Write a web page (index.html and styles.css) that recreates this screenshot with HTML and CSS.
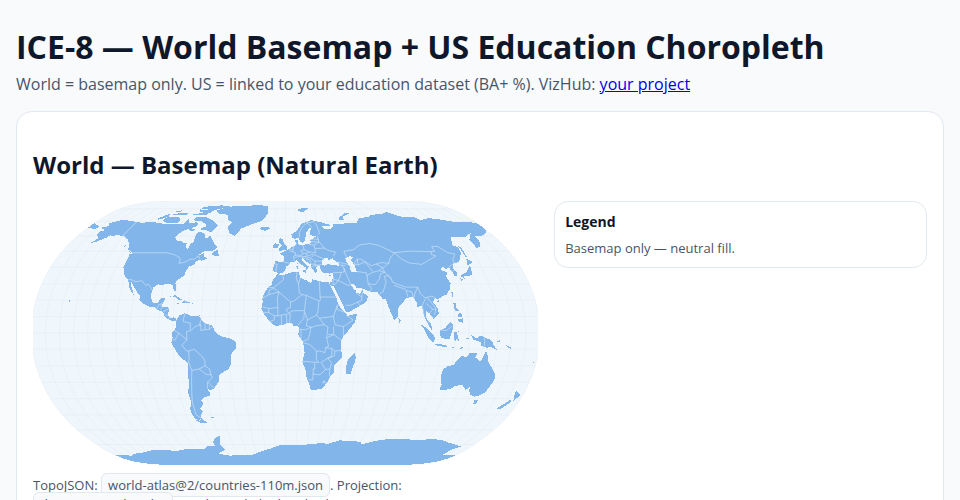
FILE: index.html
```html
<!DOCTYPE html>
<html lang="en">
<head>
<meta charset="utf-8">
<title>ICE-8 — World Basemap + US Education Choropleth</title>
<link rel="stylesheet" href="styles.css">
</head>
<body>
<header class="page-head">
  <h1 class="title">ICE-8 — World Basemap + US Education Choropleth</h1>
  <p class="subtitle">World = basemap only. US = linked to your education dataset (BA+ %). VizHub: <a href="#">your project</a></p>
</header>
<section class="card">
  <h2 class="card-title">World — Basemap (Natural Earth)</h2>
  <div class="map-grid">
    <div class="map-col">
      <svg class="map" id="map" viewBox="0 0 505 264" role="img" aria-label="World basemap"></svg>
      <p class="note">TopoJSON: <code class="chip">world-atlas@2/countries-110m.json</code>. Projection: <code class="chip">d3.geoNaturalEarth1</code>. No data is linked to this basemap.</p>
    </div>
    <aside class="legend">
      <div class="legend-title">Legend</div>
      <div class="legend-text">Basemap only — neutral fill.</div>
    </aside>
  </div>
</section>
<script src="map.js"></script>
</body>
</html>
```
FILE: styles.css
```css
* { box-sizing: border-box; }
html, body { margin: 0; height: 100%; overflow: hidden; }
body {
  padding: 16px;
  background: #f8fafc;
  color: #0f172a;
  font-family: "Open Sans", sans-serif;
}
.title { margin: 9px 0 4px; font-size: 32px; line-height: 44px; font-weight: 700; }
.subtitle { margin: 0 0 16px; font-size: 16px; line-height: 22px; color: #475569; }
.card {
  padding: 16px;
  background: #fff;
  border: 1px solid #e2e8f0;
  border-radius: 16px;
}
.card-title { margin: 20px 0 20px; font-size: 24px; line-height: 33px; font-weight: 700; }
.map-grid { display: grid; grid-template-columns: 1.355fr 1fr; gap: 16px; align-items: start; }
.map { display: block; width: 100%; height: 264px; overflow: hidden; }
.note { margin: 11px 0 0; font-size: 13px; line-height: 19px; color: #475569; }
.chip {
  padding: 2px 6px;
  font-family: "Open Sans", sans-serif;
  font-size: 13px;
  background: #f8fafc;
  border: 1px solid #e2e8f0;
  border-radius: 6px;
}
.legend { padding: 10px; border: 1px solid #e2e8f0; border-radius: 14px; background: #fff; }
.legend-title { font-size: 14px; line-height: 19px; font-weight: 700; margin-bottom: 8px; }
.legend-text { font-size: 13px; line-height: 18px; color: #475569; }
.sphere { fill: #eff6fc; shape-rendering: crispEdges; }
.graticule { fill: none; stroke: #e2e8f0; stroke-width: 0.5; opacity: 0.8; }
.land { fill: #82b6ea; fill-rule: evenodd; shape-rendering: crispEdges; }
.borders { fill: none; stroke: #e6f0fb; stroke-width: 0.5; }
```
FILE: map.js
```js
(function () {
  var NS = "http://www.w3.org/2000/svg";
  var CX = 252.5, CY = 132, S = 93;
  var svg = document.getElementById("map");

  function project(lon, lat) {
    var l = lon * Math.PI / 180, p = lat * Math.PI / 180, p2 = p * p, p4 = p2 * p2;
    var x = l * (0.8707 + p2 * (p4 * (p4 * (0.003971 * p2 - 0.001529 * p4) - 0.013791) - 0.131979));
    var y = p * (1.007226 + p2 * (0.015085 + p4 * (-0.044475 + 0.028874 * p2 - 0.005916 * p4)));
    return (CX + S * x).toFixed(1) + " " + (CY - S * y).toFixed(1);
  }
  function line(pts, closed) {
    var out = [];
    for (var i = 0; i < pts.length; i++) {
      var a = pts[i], b = pts[i + 1] || (closed ? pts[0] : null);
      if (!b) { out.push(project(a[0], a[1])); break; }
      var n = Math.max(1, Math.ceil(Math.max(Math.abs(b[0] - a[0]), Math.abs(b[1] - a[1])) / 3));
      for (var k = 0; k < n; k++) out.push(project(a[0] + (b[0] - a[0]) * k / n, a[1] + (b[1] - a[1]) * k / n));
    }
    return "M" + out.join("L") + (closed ? "Z" : "");
  }
  function add(cls, d) {
    var el = document.createElementNS(NS, "path");
    el.setAttribute("class", cls);
    el.setAttribute("d", d);
    svg.appendChild(el);
  }

  var LAND = [
    /* North America */
    [[-168,65.5],[-164,66.5],[-163,67],[-166,68.5],[-162,70],[-156.5,71.3],[-150,70.5],[-141,69.7],[-135,69],[-128,70],[-124,69.5],[-115,68.5],[-108,68],[-102,68],[-96,68],[-94,71.8],[-92,69.5],[-88,68.5],[-85,69.5],[-81.5,68.5],[-82,66.5],[-87,65],[-90,64],[-93,62],[-94.5,60],[-94.5,58.8],[-92.5,57],[-88,56.5],[-85,55.3],[-82.3,55],[-82,53],[-79.5,51.3],[-79,52],[-79,54.5],[-76.8,56.5],[-78,58.8],[-77.5,62.4],[-74,62.3],[-70,61],[-69.5,59],[-67,58.5],[-65,60.2],[-62,57.5],[-60,55.5],[-56,52.5],[-59,50],[-65,50.2],[-67,49.3],[-70,47],[-65,49],[-65,47.5],[-64.5,46.2],[-61,46],[-63.5,44.7],[-66,44],[-67,45],[-70,43.5],[-70.5,41.8],[-74,40.5],[-75.5,38],[-76,36.9],[-75.6,35.2],[-78,33.9],[-81,32],[-81.5,30.5],[-80,26.8],[-80.5,25.2],[-81.8,26.2],[-83,29],[-85,29.7],[-89,30.2],[-90,29.2],[-94,29.6],[-97.2,27.7],[-97.5,25],[-97.8,22.5],[-96,19],[-94.5,18.2],[-91.5,18.6],[-90.5,21],[-87,21.5],[-88,18.5],[-88.8,16],[-84,15.8],[-83.3,14.9],[-83.7,11],[-82,9],[-79.5,9.6],[-77.4,8.7],[-78,7.5],[-80.5,7.3],[-83,8.3],[-85.8,10],[-87.5,13],[-91.5,14],[-94.5,16.2],[-97,15.9],[-101.5,17.6],[-105.5,20],[-105.5,22.5],[-109,25.8],[-112.5,29.5],[-114.8,31.7],[-114.5,30],[-112,26.5],[-110,23],[-112,24.7],[-115,28],[-116,30.5],[-117.2,32.5],[-120.5,34.5],[-122.5,37.5],[-124.3,40.3],[-124,46],[-124.7,48.4],[-122.7,48.5],[-123,49.3],[-127.5,51],[-130,54.5],[-133.5,57.5],[-137,58.5],[-140,59.7],[-146,60.7],[-150,59.5],[-152,60.7],[-153.5,59],[-158,56.5],[-163,54.8],[-160,58.5],[-162,59.5],[-165,61],[-165,63],[-161,64],[-165,64.5]],
    /* Arctic Canada */
    [[-80,73.7],[-72,71.5],[-68,70],[-62,67],[-64,65],[-66,62.5],[-72,64],[-78,64.5],[-73,66.5],[-74,68],[-80,70],[-89,71],[-88,73.5]],
    [[-105,73],[-117,73.3],[-118,70.5],[-112,69],[-102,69],[-101,71]],
    [[-125,72],[-118,76],[-116,73.5],[-123,71.2]],
    [[-80,76.2],[-92,76],[-95,74.5],[-80,74.7]],
    [[-62,82.5],[-75,83],[-92,81.5],[-90,77],[-78,76.5],[-75,79],[-65,81]],
    [[-100,76.5],[-110,76],[-115,75],[-100,75]],
    [[-110,78.5],[-118,77],[-110,77]],
    [[-88,65.8],[-80,64],[-85,62.8]],
    [[-55.5,51.5],[-59,48],[-55,46.8],[-52.8,47]],
    [[-64,49.9],[-62,49.4],[-64,49.2]],
    [[-123,48.4],[-128,50.7],[-125.5,50]],
    [[-132,54],[-133,53],[-131.5,52.5]],
    [[-92,80],[-82,80],[-85,78.5],[-92,78.5]],
    /* Greenland */
    [[-73,78.2],[-68,80.5],[-60,82],[-45,82.5],[-30,83.5],[-20,82],[-18,76.5],[-21,72],[-24,70],[-32,68],[-40,65],[-44,60],[-49,61.5],[-53,66],[-51,69.5],[-55,71],[-58,75],[-68,76]],
    /* Caribbean */
    [[-84.8,22],[-80,23],[-74.2,20.2],[-77.5,19.9],[-78.5,21.5],[-82,22.5]],
    [[-74.4,18.5],[-73,19.9],[-68.4,18.6],[-71,18]],
    [[-78.3,18.4],[-76.3,18.1],[-77.5,17.8]],
    [[-67.2,18.5],[-65.7,18.4],[-66.9,17.9]],
    [[-61.7,10.7],[-60.9,10.2],[-61,10.8]],
    [[-156,20.2],[-155,19.8],[-155.7,19]],
    /* South America */
    [[-77.4,8.7],[-75.5,10.7],[-72,12],[-70,11.5],[-68,10.6],[-62,10.7],[-60,8.4],[-57,6],[-52,4.6],[-50,1],[-48,-1],[-44,-2.5],[-40,-3],[-35,-5.5],[-35,-9],[-39,-13],[-39,-18],[-41,-22],[-45,-23.5],[-48.5,-26],[-49,-29],[-53,-33.5],[-56.5,-35],[-58.5,-34],[-57,-36.5],[-58,-38.5],[-62,-39],[-65,-41],[-63.5,-42.5],[-65.5,-45],[-67.5,-46],[-66,-48],[-69,-51],[-68.5,-52.5],[-71,-53.8],[-74.5,-52],[-75.5,-47],[-73,-42],[-73.5,-37],[-71.5,-30],[-70.3,-18.5],[-76,-14],[-81,-6],[-80,-3],[-80.5,0],[-78.5,2],[-77.5,4],[-77.5,7]],
    [[-68.5,-52.8],[-65.2,-55],[-70,-55.5],[-74,-53.5]],
    [[-61,-51.8],[-58,-51.4],[-59,-52.3]],
    /* Africa */
    [[-6,35.8],[-2,35],[3,36.8],[10,37.3],[11,33.5],[15,32.3],[19,30.3],[20,32.8],[25,31.6],[29,31],[32,31.2],[32.5,29.9],[34,26.5],[37,21],[37.5,18.5],[39.5,15.2],[43,12],[44,10.5],[51,11.8],[49,6.5],[45,2],[41,-2],[39,-5],[39.5,-10],[40.5,-15],[35,-20],[35.5,-24],[32.8,-26],[31,-30],[27,-34],[20,-34.8],[18.3,-34],[18,-32],[15,-26.5],[14.5,-22.5],[12,-17.5],[13.5,-12],[13,-8],[12,-5],[9,-1],[9.5,3.5],[8.5,4.5],[5.5,4.5],[4.5,6.3],[1,6],[-2,4.8],[-7.5,4.4],[-11,6.8],[-13.5,9.5],[-15,11],[-17.3,14.7],[-16.3,19.5],[-17,21],[-15,25],[-13,27.7],[-10,29.5],[-9.5,32.5]],
    [[49.3,-12.2],[50.3,-15.5],[47.2,-25],[44,-25],[43.5,-21],[44.5,-16.5]],
    /* Eurasia */
    [[-5.5,36],[-2,36.8],[0,38.8],[0.3,40.5],[3.2,42],[3.2,43.2],[6,43],[8.5,44.3],[10.5,43],[12.5,41.5],[15.5,40],[15.7,38],[17,39],[16.8,40.4],[18.4,40],[16,41.8],[13.5,43.7],[12.3,45.3],[13.7,45.6],[15.5,44],[19.3,41.8],[19.4,40],[21,38.3],[22.8,36.5],[24,38],[23,40.3],[26,40.8],[26.2,40],[27,38.5],[27.5,37],[30.5,36.5],[33,36.2],[36,36.7],[35.8,35],[34.8,32.5],[34.2,31.3],[32.6,31],[32.6,30],[34.2,27.8],[35,29.5],[37,25],[39,21],[41,17.5],[43,13],[45,12.8],[52,16],[55,17.5],[58,19],[59.8,22.5],[56.5,24.5],[56.3,26.2],[54,24],[51.5,24.3],[51.2,26],[50,26.5],[48,29.5],[50,30.2],[52,27.6],[56.5,27],[61.5,25.2],[66.5,25.3],[67.5,24],[70,21],[72.5,21],[73,18],[74.5,14],[76.5,9],[77.5,8],[80,10.5],[80.2,15],[83,17.5],[87,21],[90,22],[91.8,22.3],[94.3,18.5],[94.3,16],[97.5,16.5],[98.5,10],[100.5,6],[103.5,1.4],[104,2.5],[103,5.5],[100,9],[100.5,13.5],[102.5,12],[105,8.7],[109,11.7],[109,15],[106,19],[108,21.5],[110,20.5],[113.5,22.3],[117,23.5],[120,26.5],[122,30.5],[120,34.5],[122.5,37],[119,38],[118,39],[121,40.8],[122,39],[125,39.7],[126.5,37],[126.5,34.5],[129,35.2],[129.5,37],[127.5,39.5],[130,42.3],[135,43.5],[140.5,49],[141,52.5],[137.5,54],[142,59],[150,59.5],[155,59.5],[163,62],[156,57.5],[155.8,52],[160,53],[163,56],[163,60],[170,60],[178,62.5],[179.9,65],[180,68.8],[170,70],[160,69.7],[150,71.5],[140,72.5],[130,71],[127,73],[113,73.8],[105,77.5],[100,76],[87,75],[80,73],[72,72.8],[67,68.8],[60,69],[54,68.5],[44,68],[44,66.2],[40,64.7],[35,64.3],[33,66.6],[41,66.5],[41,67.7],[33,69.5],[25,71],[15,68.5],[10,63.5],[5,61],[6,58.5],[8,58],[11,59],[12.5,56],[14,55.5],[16.5,56.5],[17,59],[18,60.5],[17.5,62],[21.5,65],[24,65.8],[21.5,63],[21.3,60.8],[24,60],[30,60],[26,59.5],[23.5,58.5],[21,57],[21,55],[18.5,54.7],[14,54],[11,54],[10,55.5],[10.5,57.5],[8.2,57],[8.5,54],[7,53.5],[4,52],[1.5,50.8],[-1.5,49.7],[-4.5,48.5],[-1.5,47],[-1.5,44],[-2,43.4],[-8,43.7],[-9,41],[-9.5,38.7],[-8.8,37],[-6.5,37]],
    /* Black Sea and Caspian, cut out by even-odd */
    [[28,41.5],[28,43.5],[30.5,46],[33,46],[33.5,44.5],[36,45],[38,47],[37,45],[41.5,42.5],[41,41],[36,41.5],[33,42],[30,41]],
    [[47,45.5],[51,47],[53,46],[51,44.5],[53,41.5],[54,37],[50,37.3],[49,39],[49.5,40.5],[47.5,43]],
    /* Chukotka across the antimeridian */
    [[-180,68.8],[-175,67.5],[-170,66],[-173,64.5],[-178,65.5],[-180,65]],
    /* European islands */
    [[-5.5,50],[1.3,51.2],[1.6,52.8],[-1.5,55],[-2,57.6],[-5,58.6],[-6,56],[-3,54],[-5,52]],
    [[-10,52],[-6,52.2],[-5.7,54.7],[-8.5,55],[-10,54]],
    [[-24,65.5],[-22,64],[-18,63.4],[-14,65],[-16,66.4],[-20,66]],
    [[12,79],[17,76.8],[25,80.3],[18,80.3]],
    [[52,71.5],[57,70.7],[56,73.5],[68,76.7],[60,76],[53,73]],
    [[12.5,38],[15.5,38.2],[15,36.7]],
    [[8.2,41],[9.7,41],[9.5,39.2],[8.5,39]],
    [[8.7,42.8],[9.5,43],[9.3,41.5]],
    [[23.5,35.5],[26.3,35.2],[24,35]],
    [[32.3,35],[34.5,35.6],[33.8,34.8]],
    /* East and South Asia islands */
    [[141,38],[142,39.5],[141,41.4],[139.8,39.5],[136.5,37],[132,35.3],[131,34],[134,34.4],[137,34.7],[140.5,35.5]],
    [[140,41.5],[141.8,45.4],[145.5,43.3],[143,42]],
    [[130,33.5],[132,33],[131,31.2]],
    [[132.5,34],[134.5,33.7],[133,32.8]],
    [[142,54.3],[143.5,52],[143,46.5],[142,46.5],[142,50]],
    [[120.8,25],[122,25],[120.8,22]],
    [[108.7,19.3],[110.5,20],[110.5,18.5]],
    [[80,9.7],[81.8,7.5],[80.5,6]],
    [[120.5,18.5],[122.3,18.3],[122,16],[124,13],[120.8,13.8]],
    [[122,8],[123.5,8.7],[126.3,9],[126,6.3],[124,6.5]],
    [[122.3,11.5],[125,12.5],[125.5,10],[123,9.8]],
    [[117.2,8.5],[119,10.7],[119.5,11.3],[118,9.3]],
    [[95.3,5.6],[98,4.2],[103.5,0],[106,-3.2],[104.5,-5.8],[101,-2.8],[98.5,1.8]],
    [[105.3,-6.8],[108.5,-6.5],[114.5,-7.8],[114,-8.7],[106.5,-7.5]],
    [[109,1.5],[113,3],[117,7],[119,5],[117.8,1],[116,-4],[110,-3],[109,0]],
    [[119.5,0.5],[125,1.5],[121,0.5],[121.5,-1],[123,-5.3],[120.5,-3],[120.3,-5.5],[119,-3]],
    [[123.6,-10.3],[127,-8.4],[125,-8.6]],
    [[116,-8.4],[119,-8.3],[122.5,-8.5],[118.5,-9]],
    [[127.8,-3],[130.5,-3.5],[128,-3.5]],
    [[131,-0.8],[135,-3.3],[138,-1.6],[145,-4.2],[147.5,-6],[147,-7],[150.7,-10.5],[146,-8.5],[143,-9],[139,-8],[138,-5.5],[133,-4],[132,-2.5]],
    [[148.5,-5.6],[152,-4.2],[152,-5.5]],
    [[156,-7],[160,-9],[161,-10],[158,-9]],
    [[165,-20.7],[167,-22.3],[164.5,-20.3]],
    [[167,-15],[167.7,-16.2],[167,-16]],
    [[177.3,-17.5],[178.6,-18],[177.4,-18.2]],
    /* Oceania */
    [[114,-22],[116.5,-20.5],[121,-19.5],[122.5,-17],[126,-14],[129.5,-15],[131,-12.2],[135,-12],[136.5,-12.2],[135.7,-15],[140,-17.5],[141.7,-13],[142.5,-10.8],[144.5,-14.2],[146,-18.5],[149,-21],[153,-25.5],[153.5,-29],[150.5,-36],[147,-38],[143.5,-38.8],[140,-37.5],[138,-35.5],[137.5,-33],[135,-34.8],[131,-31.5],[126,-32.3],[123.5,-34],[118,-35],[115,-34.3],[115.7,-31.5],[113.5,-26]],
    [[145,-40.8],[148.3,-41],[147.5,-43.2],[146,-43.5]],
    [[173,-35],[174.5,-36],[178.5,-37.7],[177,-39.5],[175,-41.5],[175,-40],[174,-39]],
    [[172.7,-40.6],[174.3,-41.7],[171,-45],[169,-46.6],[166.5,-46],[170,-43]],
    /* Antarctica */
    [[-180,-78],[-163,-78.5],[-158,-77],[-150,-76.5],[-135,-74.5],[-120,-74],[-110,-75],[-100,-73.5],[-90,-73],[-80,-73],[-75,-71],[-68,-71],[-68,-68],[-63,-65],[-58,-63.3],[-60,-66],[-62,-70],[-60,-74],[-70,-77],[-60,-78.5],[-45,-78],[-35,-78],[-28,-76],[-15,-73],[-8,-71],[0,-70],[20,-70],[33,-69],[40,-69.5],[50,-67],[58,-67.5],[70,-68],[72,-70],[80,-68],[90,-66.5],[100,-66],[110,-66],[120,-67],[135,-66],[145,-67],[155,-69],[165,-70.5],[170,-71.5],[165,-74],[165,-78],[180,-78],[180,-90],[-180,-90]]
  ];

  var BORDERS = [
    /* North America */
    [[-123,49],[-95,49],[-89,48],[-84.5,46.5],[-82.5,45],[-82.5,42.5],[-79,43],[-76.5,44],[-74.8,45],[-71.5,45],[-69,47.3],[-67.8,45.7],[-67,45]],
    [[-141,69.7],[-141,60.3],[-137,59],[-133,56],[-130,55]],
    [[-117.1,32.5],[-114.8,32.5],[-111,31.3],[-106.5,31.8],[-103,29],[-101,29.7],[-97.2,25.9]],
    [[-92.2,14.6],[-91,17.2],[-89.1,17.9],[-88.2,18.5]],[[-89.2,17.8],[-89.2,15.9]],[[-89.4,14],[-88.3,15.7]],
    [[-87.5,13],[-85,14],[-83.2,15]],[[-85.7,11],[-83.7,11]],[[-83,8.4],[-82.6,9.6]],[[-77.2,8.6],[-77.9,7.2]],
    [[-74,19.9],[-71.7,19.8],[-71.7,18]],
    /* South America */
    [[-71.5,12],[-72.5,9],[-72.5,7],[-67.5,6],[-67.5,2]],[[-60,8.4],[-61,5],[-60,5]],
    [[-60,5],[-64,4],[-67,1.5],[-70,1],[-70,-4.2],[-73.5,-7.5],[-70.5,-11],[-69,-11],[-65,-10],[-60,-14],[-58,-16.5],[-58,-20],[-55,-22],[-54.5,-25.5],[-53.5,-27],[-57.5,-30],[-53.5,-33.5]],
    [[-57,6],[-57,2],[-60,1.5],[-60,5]],[[-54,5.8],[-54,2.3],[-57,2]],[[-52,4.5],[-51.5,4],[-54,2.3]],
    [[-79,1.5],[-75.5,0],[-70,-4.2]],[[-80.3,-3.4],[-78.5,-4.5],[-75.5,0]],
    [[-69,-11],[-69,-16],[-70,-18.3]],[[-69.5,-18],[-68,-23],[-70,-33],[-72,-42],[-72,-50],[-69,-52]],
    [[-68,-22.8],[-62.5,-22],[-58,-20]],[[-62.5,-22],[-57.7,-25.3],[-54.5,-25.5]],[[-58.4,-34],[-57.7,-30]],
    /* Africa */
    [[-2,35],[-1.5,32.5],[-8.7,27.7],[-8.7,27.3]],[[-13,27.7],[-8.7,27.7]],[[-8.7,27.3],[-12,26],[-12,23.5],[-17,21]],
    [[8.5,37],[8,33],[9.5,30],[10,24.5],[12,23.5]],[[11,33.5],[9.5,30]],
    [[-8.7,27.3],[-4.8,25],[3.5,19],[6,19.5],[12,23.5]],[[-12,23.5],[-4.8,25],[-6,21],[-5.5,15.5],[-12,15],[-16.5,16]],
    [[25,31.6],[25,20]],[[25,22],[37,22]],[[25,20],[24,19.5],[15,23],[12,23.5]],[[24,19.5],[23,13],[22,11]],
    [[15,23],[13.5,14]],[[13.5,13.7],[4,13.5],[3,12]],[[3.5,19],[3.5,15.5],[1,15],[0.5,13.5],[3,12]],
    [[14,12.5],[15.5,8],[22,11]],[[13.5,13.7],[13,9],[8.7,4.7]],[[15.5,8],[14.5,4.5],[18.5,3.5],[22,4.5],[27.5,5],[30,3.7]],
    [[22,11],[24,9],[33,10],[34,10]],[[24,9],[27.5,5]],[[37,17],[34,10],[35,5]],[[35,5],[41,4]],[[41,4],[41,-1.7]],[[41,4],[48,8],[43,11]],
    [[38,18],[36.5,14.5],[42.5,12.5]],[[34,4],[34,-1],[40,-4.7]],[[30,-1],[34,-1]],
    [[30,3.7],[29,-3],[30.5,-8],[28.5,-9],[28,-12],[24,-11]],[[29,-3],[34,-1]],
    [[12.3,-6],[17,-7],[22,-11],[24,-11]],[[22,-11],[22,-16.5],[24,-18]],[[12,-17.3],[24,-18]],
    [[20,-22],[20,-28.5],[17,-28.5]],[[21,-18],[21,-22],[20,-22]],[[20,-25],[25,-25.5],[29,-22.3]],
    [[25.5,-18],[29,-22.3],[32,-22],[33,-18],[30,-15.5],[25.5,-18]],[[30,-15.5],[35,-14],[35,-11],[40.5,-10.5]],[[32,-22],[32,-26.5]],
    [[28.5,-9],[33,-9.5],[35,-11]],[[33,-9.5],[33,-14],[30,-15.5]],[[28,-29],[29.5,-30],[27.5,-30.5],[28,-29]],
    [[9.8,2.3],[14,2],[18,3.5],[17,-1],[16,-4],[12,-5]],[[11,2.2],[11,-4]],
    [[-11.5,7],[-8,8],[-8,10.5],[-5.5,10.5],[-3,11],[-2.8,5]],[[1,6],[0.5,11]],[[2.7,6.3],[3.5,11.7]],[[-17,12.3],[-12,12.5],[-12,15]],[[-12,12.5],[-8,10.5]],[[-5.5,10.5],[-5.5,15.5]],[[-3,11],[3,11.7]],
    /* Europe */
    [[-1.8,43.4],[3.2,42.4]],[[-8.8,42],[-6.5,42],[-7,39.5],[-7.4,37.2]],[[2.5,51],[4,50],[6,49.5],[8,49],[7.5,47.6],[6,46.3],[7,44],[7.5,43.8]],
    [[7,53.3],[6,51],[6,49.5]],[[3.5,51.3],[6,51]],[[8.7,54.9],[9.8,54.8]],[[14.2,54],[15,51],[12.2,50.3],[13.8,48.7]],
    [[7.5,47.6],[10,47.5],[13,47.5],[13.8,48.7]],[[7,46],[10.5,46.8],[13.7,46.5],[13.7,45.6]],[[13.8,48.7],[17,48.7],[16.5,46.8],[13.7,46.5]],
    [[15,51],[19,49.5],[24,49],[23.5,54],[19.5,54.4]],[[17,48.7],[19,49.5]],[[24,51.6],[31,52],[35,50.5],[40,49.6],[38,47]],
    [[22.5,48],[29.5,45.3]],[[16.5,46.8],[22,48.3]],[[20.3,46],[22.5,48]],[[22.7,44],[28.5,43.7]],[[13.7,45.5],[19,46],[22.7,44],[23,41.3],[26,41.3],[28,42]],
    [[19.5,42],[22,42],[23,41.3]],[[19.5,40],[21,40.8],[26,41.5]],[[16,45],[19,44.8],[19.3,42]],
    [[21,56.2],[28,56],[27.5,59.5]],[[21,57.5],[25,58],[28,57.5]],[[23.5,54],[28,56]],[[28,56],[31,53],[31,52]],
    [[28,69],[29,66],[30,62],[28,60.5]],[[12,59],[12,62],[15,66],[20,69],[28,70]],[[20,69],[24,66]],
    /* Asia */
    [[48,46],[47,50],[55,51],[61,54],[70,55],[77,53.7],[83,51],[87,49]],[[87,49],[98,50],[107,50],[117,49.7],[120,50],[120,53],[125,53],[130,49],[135,48.3],[131,45],[130.5,42.5]],
    [[87,49],[91,45],[96,42.7],[105,41.8],[112,44.5],[119,47],[116,48],[117,49.7]],
    [[53,42],[56,45],[59,45],[61,44],[66,41],[70,42],[74,43],[80,42.5],[82,45.5],[87,49]],
    [[80,42.5],[74,39.5],[75,37],[79,33],[79,31],[88,28],[92,28],[97,28],[98,24],[101,21.5],[106,22.5],[108,21.5]],
    [[124.5,40],[128,41.5],[130.5,42.5]],[[126.5,37.8],[129,38.5]],
    [[68,23.7],[71,25],[74.5,31],[74,34.5],[77,35],[79,33]],[[80,29],[88,26.5]],[[88,26],[88.5,22]],[[88,26],[92,25],[92.5,21]],[[97,28],[94,24],[92.5,21]],
    [[98.5,10],[98,17],[101,21]],[[101,18],[105,14.5],[102.5,12]],[[102,22],[107.5,15],[106,11]],[[105,14.5],[107.5,14.5]],[[100.5,6.5],[102,6.2]],
    [[61,30],[61,35],[66,37],[71,38],[75,37]],[[61,30],[66,29.5],[70,33],[71.5,36],[75,37]],[[61.5,25.2],[63,27],[61,30]],[[61,35],[61,36.6],[54,37.5]],
    [[44.5,39.5],[46,35],[48,30]],[[36,36.7],[42,37],[44.5,37.3],[44.5,39.5],[43,41.3],[41.5,41.5]],[[26,41.3],[26,40.8]],
    [[42,37],[41,34.5],[39,32],[37,32.5],[35.7,32.7]],[[39,32],[46,29],[48,29.5]],[[35,29.5],[37,30],[39,32]],[[35.8,33],[36,34.6]],[[34.9,29.5],[35.5,32.7]],
    [[43,17],[47,17],[52,19],[55,20],[55,22],[51.5,24.3]],[[52,19],[53,16.7]],[[55,22],[56.2,25]],
    [[56,45],[56,41.5],[53,42]],[[56,41.5],[62,43.5]],[[66,37.5],[62,43]],[[71,38],[74,40],[70,42]],[[40,43.3],[48.5,41.8]],[[43,41.3],[46,41]],
    [[141,-2.6],[141,-9]],[[109.6,1.8],[114,1.5],[117.7,4.2]]
  ];

  var sphere = [], lat;
  for (lat = 90; lat >= -90; lat -= 3) sphere.push([180, lat]);
  for (lat = -90; lat <= 90; lat += 3) sphere.push([-180, lat]);
  add("sphere", line(sphere, true));

  var grat = "", v;
  for (v = -180; v <= 180; v += 10) {
    grat += v % 90 === 0 ? line([[v, -90], [v, 90]]) : line([[v, -80], [v, 80]]);
  }
  for (v = -80; v <= 80; v += 10) grat += line([[-180, v], [180, v]]);
  add("graticule", grat);

  add("land", LAND.map(function (r) { return line(r, true); }).join(""));
  add("borders", BORDERS.map(function (r) { return line(r); }).join(""));
})();
```
